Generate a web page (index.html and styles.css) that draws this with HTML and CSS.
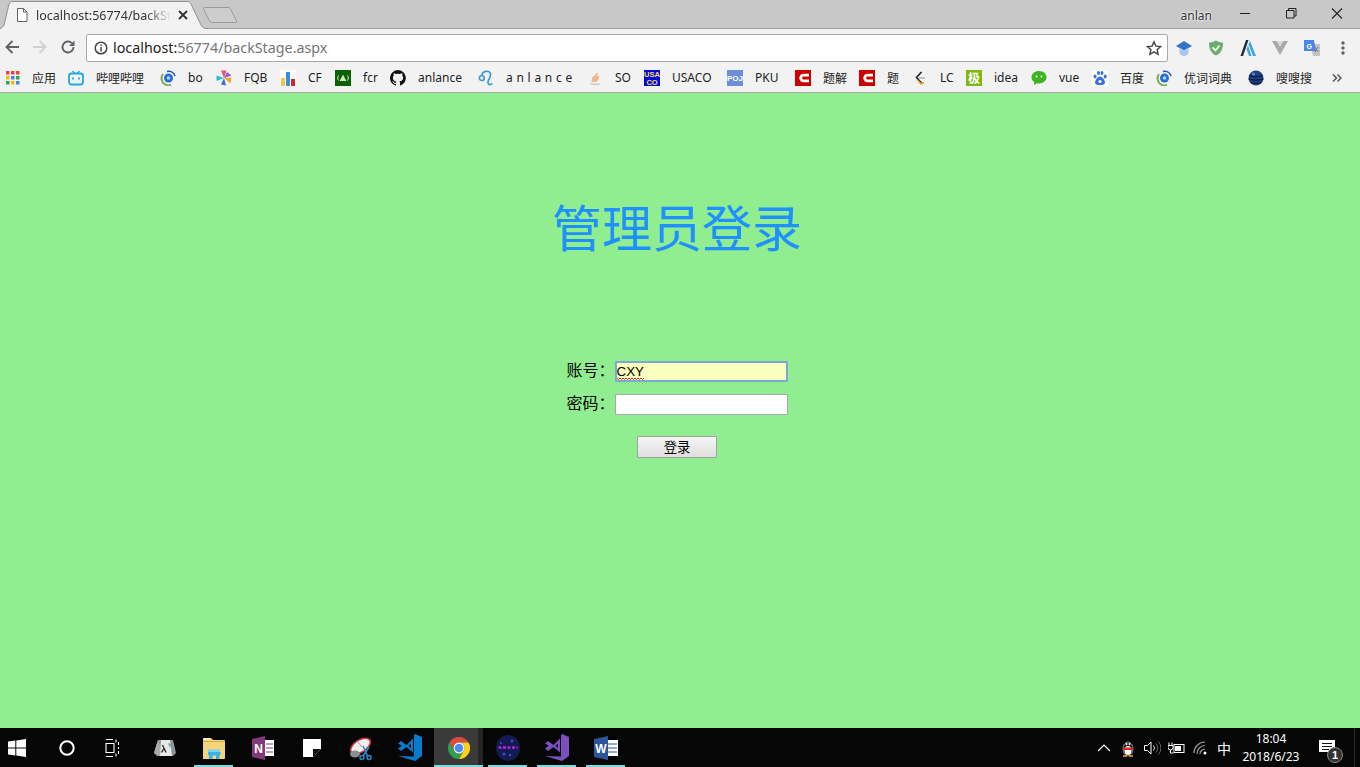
FILE: index.html
```html
<!DOCTYPE html>
<html>
<head>
<meta charset="utf-8">
<title>管理员登录</title>
<link rel="stylesheet" href="styles.css">
</head>
<body>
<div class="tabstrip">
  <div class="tab">
    <svg class="tab-shape" width="208" height="29" viewBox="0 0 208 29"><path d="M0 28.500 C2 28 3 27 4 25 L9 4 C10 2 11 1.500 13 1.500 L187 1.500 C189 1.500 190 2 191 4 L201 25 C202 27 203 28 206 28.500 L208 28.500 L208 29 L0 29Z" fill="#f2f2f2"/><path d="M0 28.500 C2 28 3 27 4 25 L9 4 C10 2 11 1.500 13 1.500 L187 1.500 C189 1.500 190 2 191 4 L201 25 C202 27 203 28 206 28.500 L208 28.500" fill="none" stroke="#8f8f8f"/></svg>
    <svg class="tab-icon" width="16" height="16" viewBox="0 0 16 16"><path d="M3.500 1.500h6l3.500 3.500v9.500h-9.500zM9.500 1.500v3.500h3.500" fill="#fff" stroke="#5f6368"/></svg>
    <span class="tab-title">localhost:56774/backSt</span>
    <svg class="tab-close" width="10" height="10" viewBox="0 0 10 10"><path d="M1 1l8 8M9 1l-8 8" stroke="#333" stroke-width="1.800"/></svg>
  </div>
  <svg class="newtab" width="36" height="18" viewBox="0 0 36 18"><path d="M1.500 1.500h24c1 0 1.500.5 2 1.500l6 12c.5 1 0 1.500-1 1.500h-24c-1 0-1.500-.5-2-1.500l-6-12c-.5-1 0-1.500 1-1.500z" fill="#cdcdcd" stroke="#9a9a9a"/></svg>
  <span class="user">anlan</span>
  <div class="winbtns">
    <svg width="46" height="28" viewBox="0 0 46 28"><path d="M18 13.500h10" stroke="#222"/></svg>
    <svg width="46" height="28" viewBox="0 0 46 28"><path d="M18.500 10.500h7.500v7.500h-7.500zM20.500 10.500v-2h7.500v7.500h-2" fill="none" stroke="#222"/></svg>
    <svg width="46" height="28" viewBox="0 0 46 28"><path d="M18 8.500l10 10M28 8.500l-10 10" stroke="#222" stroke-width="1.100"/></svg>
  </div>
</div>

<div class="toolbar">
  <svg class="navbtn" width="16" height="16" viewBox="0 0 16 16"><path d="M15 8H2.500M8.500 2L2.500 8l6 6" fill="none" stroke="#5f6368" stroke-width="1.900"/></svg>
  <svg class="navbtn" width="16" height="16" viewBox="0 0 16 16"><path d="M1 8h12.500M7.500 2l6 6-6 6" fill="none" stroke="#cfd1d3" stroke-width="1.900"/></svg>
  <svg class="navbtn" width="16" height="16" viewBox="0 0 16 16"><path d="M13.500 8a5.500 5.500 0 1 1-1.600-3.900" fill="none" stroke="#5f6368" stroke-width="1.900"/><path d="M14.500 1.500v5.500H9z" fill="#5f6368"/></svg>
  <div class="omnibox">
    <svg class="info" width="14" height="14" viewBox="0 0 14 14"><circle cx="7" cy="7" r="5.800" fill="none" stroke="#444" stroke-width="1.500"/><path d="M7 6v4.500M7 3.500v1.500" stroke="#444" stroke-width="1.500"/></svg>
    <span class="url"><b>localhost:</b>56774/backStage.aspx</span>
    <svg class="star" width="16" height="16" viewBox="0 0 16 16"><path d="M8 1.800l1.900 4.300 4.600.5-3.400 3.100 1 4.600L8 11.900l-4.100 2.400 1-4.600L1.500 6.600l4.600-.5z" fill="none" stroke="#444" stroke-width="1.400"/></svg>
  </div>
  <div class="extensions">
    <svg width="16" height="16" viewBox="0 0 16 16"><path d="M8 1L16 6 8 10.500 0 6z" fill="#2f74c9"/><path d="M3.500 8.500L8 11l4.500-2.500V12a4.500 4 0 0 1-9 0z" fill="#a9c6ec"/></svg>
    <svg width="16" height="16" viewBox="0 0 16 16"><path d="M8 .5c2.500 1.500 4.500 2 7 2 0 6-1.500 10.500-7 13-5.500-2.500-7-7-7-13 2.500 0 4.500-.5 7-2z" fill="#68ae6a"/><path d="M4.500 7.500L7.500 10.500 11.500 5.500" fill="none" stroke="#fff" stroke-width="1.800"/></svg>
    <svg width="16" height="16" viewBox="0 0 16 16"><path d="M6 0h2.500L3 16H.5z" fill="#1b2a3a"/><path d="M8.500 4.500L13 16h3L10 1z" fill="#3fa5dc"/><path d="M6.500 9L9 16h2.500L8 5.500z" fill="#3fa5dc"/></svg>
    <svg width="16" height="16" viewBox="0 0 16 16"><path d="M0 1h16L8 15z" fill="#a8a8a8"/><path d="M4.500 1h7L8 7z" fill="#d8d8d8"/></svg>
    <svg width="16" height="16" viewBox="0 0 16 16"><path d="M6 4h10v12H9z" fill="#c4c4c4"/><path d="M0 0h10l2 11H0z" fill="#4a86e8"/><path d="M11 7l3 5M14 7l-3 5" stroke="#777"/><text x="2.500" y="9" class="ext-g">G</text></svg>
    <svg class="menu" width="4" height="16" viewBox="0 0 4 16"><circle cx="2" cy="3" r="1.700" fill="#5f6368"/><circle cx="2" cy="8" r="1.700" fill="#5f6368"/><circle cx="2" cy="13" r="1.700" fill="#5f6368"/></svg>
  </div>
</div>

<div class="bookmarks">
  <a class="mark apps"><svg width="16" height="16" viewBox="0 0 16 16"><g><rect x="1" y="1" width="3.500" height="3.500" fill="#e8453c"/><rect x="6" y="1" width="3.500" height="3.500" fill="#e8453c"/><rect x="11" y="1" width="3.500" height="3.500" fill="#e8453c"/><rect x="1" y="6" width="3.500" height="3.500" fill="#fbbc05"/><rect x="6" y="6" width="3.500" height="3.500" fill="#4285f4"/><rect x="11" y="6" width="3.500" height="3.500" fill="#34a853"/><rect x="1" y="11" width="3.500" height="3.500" fill="#34a853"/><rect x="6" y="11" width="3.500" height="3.500" fill="#fbbc05"/><rect x="11" y="11" width="3.500" height="3.500" fill="#4285f4"/></g></svg>应用</a>
  <a class="mark"><svg width="16" height="16" viewBox="0 0 16 16"><path d="M4.500 1l2.500 2.500M11.500 1L9 3.500" stroke="#20a8e0" stroke-width="1.400"/><rect x="1" y="3.500" width="14" height="11" rx="2.500" fill="none" stroke="#20a8e0" stroke-width="1.800"/><path d="M5 7.500v2M11 7.500v2" stroke="#20a8e0" stroke-width="1.800"/></svg>哔哩哔哩</a>
  <a class="mark"><svg width="16" height="16" viewBox="0 0 16 16"><circle cx="8.500" cy="8" r="4.500" fill="#2a6fd0"/><circle cx="8.500" cy="8" r="1.800" fill="#a9d8f5"/><path d="M7 1.500a7 7 0 0 1 8 4.500" fill="none" stroke="#1d55b5" stroke-width="1.600"/><path d="M3 4a7 7 0 0 0 1.500 10 7 7 0 0 0 6.500 1" fill="none" stroke="#7da953" stroke-width="2"/></svg>bo</a>
  <a class="mark"><svg width="16" height="16" viewBox="0 0 16 16"><path d="M8 8L5 .5h5.500z" fill="#e9536b"/><path d="M8 8l3-6 4.500 3.500z" fill="#8c5fc9"/><path d="M8 8l7.500-.5-1 6z" fill="#f1a62c"/><path d="M8 8l2 7.500-5-1z" fill="#3a6fd8"/><path d="M8 8L.5 11V5.500z" fill="#27bfc9"/></svg>FQB</a>
  <a class="mark"><svg width="16" height="16" viewBox="0 0 16 16"><rect width="16" height="16" fill="#fff"/><rect x="1" y="8" width="4" height="8" fill="#f4c542"/><rect x="6" y="2" width="4" height="14" fill="#3a8ee0"/><rect x="11" y="9" width="4" height="7" fill="#cc2a2a"/></svg>CF</a>
  <a class="mark"><svg width="16" height="16" viewBox="0 0 16 16"><rect width="16" height="16" fill="#0b6200"/><path d="M8 4.500l3.300 6.500H4.700z" fill="#d8e8d0"/><path d="M3.500 5.500C2.500 7 2.500 9 3.500 10.500M12.500 5.500C13.500 7 13.500 9 12.500 10.500" fill="none" stroke="#d8e8d0"/></svg>fcr</a>
  <a class="mark"><svg width="16" height="16" viewBox="0 0 16 16"><path d="M8 0a8 8 0 0 0-2.500 15.600c.4.100.5-.2.500-.4v-1.400c-2.200.5-2.700-1-2.700-1-.4-.9-.9-1.200-.9-1.200-.7-.5.100-.5.100-.5.800.1 1.200.8 1.200.8.700 1.200 1.900.9 2.300.7.100-.5.300-.9.500-1.100-1.800-.2-3.600-.9-3.600-4 0-.9.300-1.600.8-2.100-.1-.2-.4-1 .1-2.100 0 0 .7-.2 2.200.8a7.600 7.600 0 0 1 4 0c1.500-1 2.200-.8 2.200-.8.400 1.100.2 1.900.1 2.100.5.600.8 1.300.8 2.100 0 3.100-1.900 3.700-3.700 3.900.3.300.6.700.6 1.500v2.200c0 .2.100.5.600.4A8 8 0 0 0 8 0z" fill="#111"/></svg>anlance</a>
  <a class="mark"><svg width="16" height="16" viewBox="0 0 16 16"><circle cx="3.800" cy="8" r="2.500" fill="none" stroke="#3a9ad9" stroke-width="1.700"/><path d="M4 5.500C3 1 13 -1 12.500 5 12.200 8.500 9.300 10.500 10 13 10.500 15 13 15.200 14.300 13.500" fill="none" stroke="#3a9ad9" stroke-width="1.700"/></svg><span class="spaced">a n l a n c e</span></a>
  <a class="mark"><svg width="16" height="16" viewBox="0 0 16 16"><path d="M3 13.500h10l-.8 1.500H3.800z" fill="#c9c9c9"/><path d="M5 8l5-5.500 1.500 1L9 6l3-.5v3L9.500 12H4.500z" fill="#f3b58a"/></svg>SO</a>
  <a class="mark"><svg width="16" height="16" viewBox="0 0 16 16"><rect width="16" height="16" fill="#0a0ad8"/><text x="8" y="7" class="usa">USA</text><text x="8" y="14.500" class="usa">CO</text></svg>USACO</a>
  <a class="mark"><svg width="16" height="16" viewBox="0 0 16 16"><rect width="16" height="16" fill="#6d8fd6"/><text x="8" y="10.500" class="poj">POJ</text></svg>PKU</a>
  <a class="mark"><svg width="16" height="16" viewBox="0 0 16 16"><rect width="16" height="16" fill="#cc0000"/><path d="M14 5.200H8.500a2.800 2.800 0 0 0 0 5.600H14" fill="none" stroke="#fff" stroke-width="2.800"/></svg>题解</a>
  <a class="mark"><svg width="16" height="16" viewBox="0 0 16 16"><rect width="16" height="16" fill="#cc0000"/><path d="M14 5.200H8.500a2.800 2.800 0 0 0 0 5.600H14" fill="none" stroke="#fff" stroke-width="2.800"/></svg>题</a>
  <a class="mark"><svg width="16" height="16" viewBox="0 0 16 16"><path d="M9.500 2L4.500 7.500l5 5.500" fill="none" stroke="#222" stroke-width="1.600"/><path d="M7 8h6" stroke="#aaa" stroke-width="1.400"/><path d="M5.500 10l3.500 4 3-1.500" fill="none" stroke="#f0a030" stroke-width="1.500"/></svg>LC</a>
  <a class="mark"><svg width="16" height="16" viewBox="0 0 16 16"><rect width="16" height="16" fill="#7fb80e"/><text x="8" y="13" class="ji">极</text></svg>idea</a>
  <a class="mark"><svg width="16" height="16" viewBox="0 0 16 16"><path d="M8 1C3.800 1 .5 3.700.5 7.200c0 2 1.100 3.700 2.800 4.900L2.800 15l3.100-1.800c.7.100 1.400.2 2.100.2 4.200 0 7.500-2.800 7.500-6.200S12.200 1 8 1z" fill="#3eb51f"/><circle cx="5.500" cy="6.500" r="1" fill="#fff"/><circle cx="10.500" cy="6.500" r="1" fill="#fff"/></svg>vue</a>
  <a class="mark"><svg width="16" height="16" viewBox="0 0 16 16"><rect width="16" height="16" fill="#fff"/><ellipse cx="3" cy="6.500" rx="1.500" ry="2" fill="#3a6fe0"/><ellipse cx="6.500" cy="3" rx="1.500" ry="2" fill="#3a6fe0"/><ellipse cx="10" cy="3" rx="1.500" ry="2" fill="#3a6fe0"/><ellipse cx="13.200" cy="6.500" rx="1.500" ry="2" fill="#3a6fe0"/><path d="M8 6.500c2.500 0 5 4 5 6s-2 2.500-5 2.500-5-.5-5-2.500 2.500-6 5-6z" fill="#3a6fe0"/><circle cx="8" cy="11.500" r="1.600" fill="#fff"/></svg>百度</a>
  <a class="mark"><svg width="16" height="16" viewBox="0 0 16 16"><circle cx="8.500" cy="8" r="4.500" fill="#2a6fd0"/><circle cx="8.500" cy="8" r="1.800" fill="#a9d8f5"/><path d="M7 1.500a7 7 0 0 1 8 4.500" fill="none" stroke="#1d55b5" stroke-width="1.600"/><path d="M3 4a7 7 0 0 0 1.500 10 7 7 0 0 0 6.500 1" fill="none" stroke="#7da953" stroke-width="2"/></svg>优词词典</a>
  <a class="mark"><svg width="16" height="16" viewBox="0 0 16 16"><circle cx="8" cy="8" r="7.500" fill="#1c3f86"/><path d="M1 5.500c4 1.500 9 1.500 14 0M.5 9c4.500 1.500 10 1.500 15 0M2.500 12.500c4 1 7 1 11 0" fill="none" stroke="#0d1b3d" stroke-width="1.200"/><circle cx="5.500" cy="4" r="1.500" fill="#5b8ad4"/></svg>嗖嗖搜</a>
  <svg class="more" width="10" height="10" viewBox="0 0 10 10"><path d="M1 1.500L4.500 5 1 8.500M5.500 1.500L9 5 5.500 8.500" fill="none" stroke="#555" stroke-width="1.500"/></svg>
</div>

<main class="page">
  <h1 class="page-title">管理员登录</h1>
  <form class="login">
    <label class="field-label" for="account">账号：</label>
    <span class="field-wrap">
      <input class="field field-focus" id="account" type="text" value="CXY">
      <svg class="squiggle" width="27" height="3" viewBox="0 0 27 3"><path d="M0 1l1.500 1.500L3 1l1.500 1.500L6 1l1.500 1.500L9 1l1.500 1.500L12 1l1.500 1.500L15 1l1.500 1.500L18 1l1.500 1.500L21 1l1.500 1.500L24 1l1.500 1.500L27 1" fill="none" stroke="#e02020"/></svg>
    </span>
    <label class="field-label" for="password">密码：</label>
    <input class="field" id="password" type="password">
    <button class="submit" type="button">登录</button>
  </form>
</main>

<div class="taskbar">
  <div class="task"><svg width="18" height="18" viewBox="0 0 18 18"><path d="M0 2.600L7.300 1.600V8.500H0zM8.300 1.400L18 0V8.500H8.300zM0 9.500H7.300V16.400L0 15.400zM8.300 9.500H18V18L8.300 16.600z" fill="#fff"/></svg></div>
  <div class="task"><svg width="16" height="16" viewBox="0 0 16 16"><circle cx="8" cy="8" r="6.700" fill="none" stroke="#fff" stroke-width="2"/></svg></div>
  <div class="task taskview"><svg width="18" height="18" viewBox="0 0 18 18"><path d="M0 .5h7M0 17.500h7M0 4.500h8v9H0zM10 .5v3M10 14.500v3M12.500 3v3M12.500 8v2M12.500 12v3" transform="translate(1 0)" fill="none" stroke="#fff" stroke-width="1.100"/></svg></div>
  <div class="task"><svg width="22" height="18" viewBox="0 0 22 18"><path d="M4 1h15l3 13-3 3H3l-3-3z" fill="#8f9498"/><path d="M7 1h9l2 16H6z" fill="#e8e8e8"/><path d="M0 14l6 3V8L4 1z" fill="#a8acaf"/><path d="M8.500 6l3.500 7.500M10.200 9l-2.700 4.500" stroke="#222" stroke-width="1.300" fill="none"/><path d="M14 4l3 1-1 4z" fill="#4fb3a5"/></svg></div>
  <div class="task running"><svg width="22" height="22" viewBox="0 0 22 22"><path d="M0 1h8l2 2h11a1 1 0 0 1 1 1v17a1 1 0 0 1-1 1H0z" fill="#f6d67a"/><path d="M0 4.500h22" stroke="#d9ab44"/><path d="M1 2h6" stroke="#fff" stroke-width="1.200"/><path d="M4.500 12.500h13l-1 3.500H6z" fill="#7bd0f5"/><path d="M5 15h12.500v3h-1v4H13v-3.500h-3.500V22H6v-4H5z" fill="#35b1ee"/></svg></div>
  <div class="task"><svg width="22" height="24" viewBox="0 0 22 24"><path d="M0 3L13 0v24L0 21z" fill="#80397b"/><path d="M13 4h9v16h-9z" fill="#fff"/><path d="M14 8h7M14 12h7M14 16h7" stroke="#80397b"/><text x="6.500" y="16.500" class="tile-letter">N</text></svg></div>
  <div class="task"><svg width="18" height="18" viewBox="0 0 18 18"><path d="M0 0h18v10l-8 8H0z" fill="#fff"/><path d="M10 10h8l-8 8z" fill="#111"/></svg></div>
  <div class="task"><svg width="24" height="26" viewBox="0 0 24 26"><ellipse cx="11.500" cy="11" rx="11" ry="6" transform="rotate(-32 11.500 11)" fill="#eee" stroke="#c8333c" stroke-width="1.600"/><path d="M13 12L8 6" stroke="#999"/><ellipse cx="6" cy="19" rx="5" ry="3.500" fill="#8b8f93"/><path d="M14 11l5 11M20 12l-6 9" stroke="#2e86c8" stroke-width="1.600"/><circle cx="20" cy="22.500" r="2" fill="none" stroke="#2e86c8" stroke-width="1.500"/><circle cx="13" cy="22.500" r="2" fill="none" stroke="#2e86c8" stroke-width="1.500"/></svg></div>
  <div class="task"><svg width="24" height="27" viewBox="0 0 24 27"><path d="M17 0L24 3V22L17 27 0 22l16 .5V1zM0 9.500L3 7l5.500 4L15 4.500V18.500L8.500 13 3 17 0 14.500 3.800 11.800zM10.500 11.800l2.500 2.200V9.500z" fill="#0a7acc" fill-rule="evenodd"/></svg></div>
  <div class="task current"><svg width="22" height="22" viewBox="0 0 22 22"><path d="M11 0A11 11 0 0 1 20.530 5.500H11A5.500 5.500 0 0 0 6.240 13.750L1.470 5.500A11 11 0 0 1 11 0z" fill="#dd4b3e"/><path d="M1.470 5.500L6.240 13.750A5.500 5.500 0 0 0 15.760 13.750L11 22A11 11 0 0 1 1.470 5.500z" fill="#2fa04d"/><path d="M20.530 5.500H11A5.500 5.500 0 0 1 15.760 13.750L11 22A11 11 0 0 0 20.530 5.500z" fill="#fcd116"/><circle cx="11" cy="11" r="5.500" fill="#fff"/><circle cx="11" cy="11" r="4.300" fill="#4c8bf5"/></svg></div>
  <div class="task running"><svg width="24" height="26" viewBox="0 0 24 26"><ellipse cx="12" cy="13" rx="12" ry="13" fill="#141a52"/><circle cx="8" cy="19" r="1.500" fill="#3a4bd0"/><circle cx="16" cy="6" r="1.500" fill="#3a4bd0"/><circle cx="14" cy="20" r="1" fill="#4a6be0"/><circle cx="5" cy="8" r="1" fill="#3a4bd0"/><path d="M2.500 12.500h19" stroke="#c21fd8" stroke-width="2.500" stroke-dasharray="3 1.500"/></svg></div>
  <div class="task running"><svg width="24" height="27" viewBox="0 0 24 27"><path d="M17 0L24 3V22L17 27 0 22l16 .5V1zM0 9.500L3 7l5.500 4L15 4.500V18.500L8.500 13 3 17 0 14.500 3.800 11.800zM10.500 11.800l2.500 2.200V9.500z" fill="#7a4fbf" fill-rule="evenodd"/></svg></div>
  <div class="task running"><svg width="24" height="24" viewBox="0 0 24 24"><path d="M13 4h11v16H13z" fill="#fff"/><path d="M14 8h9M14 12h9M14 16h9" stroke="#2b579a"/><path d="M0 3L14 0v24L0 21z" fill="#2b579a"/><text x="7" y="16.500" class="tile-letter">W</text></svg></div>

  <div class="tray">
    <span class="tray-slot"><svg width="14" height="8" viewBox="0 0 14 8"><path d="M1 7l6-6 6 6" fill="none" stroke="#fff" stroke-width="1.200"/></svg></span>
    <span class="tray-slot"><svg width="16" height="18" viewBox="0 0 16 18"><ellipse cx="8" cy="10" rx="5" ry="7" fill="#222" stroke="#eee" stroke-width=".5"/><ellipse cx="8" cy="11.500" rx="3.500" ry="4.500" fill="#fff"/><path d="M3 8.500h10l-1 2.500H4z" fill="#e22"/><path d="M3 17h4M9 17h4" stroke="#f5a623" stroke-width="1.500"/><circle cx="6.500" cy="5" r="1" fill="#fff"/><circle cx="9.500" cy="5" r="1" fill="#fff"/></svg></span>
    <span class="tray-slot"><svg width="17" height="14" viewBox="0 0 17 14"><path d="M.5 4.500h3L7 1v12L3.500 9.500h-3z" fill="none" stroke="#fff"/><path d="M9.500 4.500a4 4 0 0 1 0 5" fill="none" stroke="#ddd"/><path d="M12 2.500a7 7 0 0 1 0 9M14.500 .5a10 10 0 0 1 0 13" fill="none" stroke="#666"/></svg></span>
    <span class="tray-slot"><svg width="17" height="14" viewBox="0 0 17 14"><path d="M1 1.500v3M4 1.500v3M0 4.500h5v2a2.500 2.500 0 0 1-5 0zM2.500 9v3h3" fill="none" stroke="#fff"/><rect x="6" y="3.500" width="10" height="8" fill="none" stroke="#fff"/><rect x="7" y="5" width="6" height="5" fill="#fff"/></svg></span>
    <span class="tray-slot"><svg width="15" height="14" viewBox="0 0 15 14"><path d="M1 12A11 11 0 0 1 12 1M4 13A8 8 0 0 1 12 4.500M7 13a5 5 0 0 1 5-5" fill="none" stroke="#999" stroke-width="1.200"/><circle cx="12" cy="12" r="1.500" fill="#fff"/></svg></span>
    <span class="tray-slot ime">中</span>
    <div class="clock"><span>18:04</span><span>2018/6/23</span></div>
    <div class="notify">
      <svg width="18" height="17" viewBox="0 0 18 17"><path d="M1 0h16v12h-3l-4 4v-4H1z" fill="#fff"/><path d="M4 3.500h10M4 6.500h10M4 9.500h7" stroke="#111"/></svg>
      <span class="badge">1</span>
    </div>
  </div>
</div>
</body>
</html>
```

FILE: styles.css
```css
* { box-sizing: border-box; }
html, body { margin: 0; height: 767px; overflow: hidden; }
body {
  display: flex;
  flex-direction: column;
  font-family: "Noto Sans", "Noto Sans CJK SC", sans-serif;
  background: #90ee90;
}
svg { display: block; flex: none; }

/* title bar */
.tabstrip {
  height: 29px;
  flex: none;
  display: flex;
  background: #c8c8c8;
  border-bottom: 1px solid #a0a0a0;
}
.tab {
  width: 198px;
  height: 28px;
  display: flex;
  align-items: center;
  position: relative;
  padding: 2px 0 0 14px;
  z-index: 1;
}
.tab-shape { position: absolute; left: 0; top: 0; }
.tab-icon, .tab-title, .tab-close { position: relative; }
.tab-icon { margin-top: -1px; }
.tab-title {
  margin-left: 6px;
  width: 135px;
  font-size: 12.500px;
  color: #333;
  white-space: nowrap;
  -webkit-mask-image: linear-gradient(to right, #000 82%, transparent 100%);
  mask-image: linear-gradient(to right, #000 82%, transparent 100%);
}
.tab-close { margin-left: 7px; }
.newtab { margin: 6px 0 0 5px; }
.user {
  margin: 7px 0 0 auto;
  font-size: 12px;
  color: #333;
  text-shadow: 0 0 3px #fff, 0 0 2px #fff;
}
.winbtns { display: flex; margin-left: 10px; }

/* toolbar */
.toolbar {
  height: 35px;
  flex: none;
  display: flex;
  align-items: center;
  background: #f2f2f2;
}
.navbtn { margin: 1px 6px 0; }
.navbtn:first-child { margin-left: 4px; }
.omnibox {
  width: 1082px;
  height: 28px;
  margin-left: 4px;
  margin-top: 2px;
  display: flex;
  align-items: center;
  padding: 0 5px 0 7px;
  background: #fff;
  border: 1px solid #a9a9a9;
  border-radius: 2px;
}
.url { margin-left: 5px; font-size: 14.300px; color: #757575; }
.url b { font-weight: 400; color: #222; }
.star { margin-left: auto; }
.extensions {
  display: flex;
  align-items: center;
  gap: 16px;
  margin: 2px 0 0 8px;
}
.menu { margin-left: 5px; }
.ext-g { font: 700 7px "Liberation Sans", sans-serif; fill: #fff; }

/* bookmarks */
.bookmarks {
  height: 29px;
  flex: none;
  display: grid;
  grid-template-columns: 63px 92px 56px 64px 55px 55px 88px 109px 57px 83px 68px 64px 53px 54px 65px 61px 64px 92px 84px 10px;
  align-items: center;
  padding: 0 0 1px 5px;
  background: #f2f2f2;
  border-bottom: 1px solid #a8a8a8;
}
.mark {
  display: flex;
  align-items: center;
  gap: 12px;
  font-size: 12px;
  color: #222;
  white-space: nowrap;
}
.apps { gap: 11px; }
.spaced { letter-spacing: .3px; }
.usa { font: 700 7.500px "Liberation Sans", sans-serif; fill: #f4e04d; text-anchor: middle; }
.poj { font: 700 8px "Liberation Sans", sans-serif; fill: #fff; text-anchor: middle; }
.ji { font: 700 12px "Noto Sans CJK SC", sans-serif; fill: #fff; text-anchor: middle; }

/* login page */
.page {
  flex: 1;
  padding-right: 6px;
  display: flex;
  flex-direction: column;
  align-items: center;
}
.page-title {
  margin: 100px 0 0;
  font-size: 50px;
  line-height: 70px;
  font-weight: 400;
  color: #1e90ff;
}
.login {
  margin-top: 98px;
  display: grid;
  grid-template-columns: 48px 173px;
  row-gap: 12px;
  align-items: start;
}
.field-label {
  height: 19px;
  margin-bottom: 2px;
  font-size: 16px;
  line-height: 19px;
  color: #000;
  white-space: nowrap;
}
.field-wrap { position: relative; display: block; height: 21px; }
.field {
  display: block;
  width: 173px;
  height: 21px;
  padding: 1px 2px;
  background: #fff;
  border: 1px solid #a9a9a9;
  font: 13.333px "Liberation Sans", sans-serif;
  outline: none;
}
.field-focus {
  background: #faffbd;
  border: 2px solid #7aa9d6;
  padding: 0;
}
.squiggle { position: absolute; left: 2px; top: 16px; }
.submit {
  grid-column: 1 / 3;
  justify-self: center;
  width: 80px;
  height: 22px;
  margin-top: 9px;
  padding: 0 0 2px;
  border: 1px solid #a0a0a0;
  border-radius: 1px;
  background: linear-gradient(#f6f6f6, #dedede);
  font: 13.333px "Noto Sans CJK SC", sans-serif;
  color: #000;
}

/* windows taskbar */
.taskbar {
  height: 39px;
  flex: none;
  display: flex;
  background: #060606;
  color: #fff;
}
.task {
  width: 49px;
  display: flex;
  align-items: center;
  justify-content: center;
  position: relative;
}
.task:first-child { width: 42px; justify-content: flex-end; padding-right: 16px; }
.taskview { padding-right: 4px; }
.running::after, .current::after {
  content: "";
  position: absolute;
  bottom: 0;
  left: 5px;
  right: 5px;
  height: 2px;
  background: #7fd8e0;
}
.current { background: linear-gradient(to right, #3a3a3a 44px, #242424 44px); }
.current::after { left: 0; right: 0; }
.tile-letter { font: 700 12px "Liberation Sans", sans-serif; fill: #fff; text-anchor: middle; }
.tray {
  margin-left: auto;
  display: flex;
  align-items: center;
  height: 39px;
  padding-right: 5px;
}
.tray-slot {
  width: 24px;
  display: flex;
  justify-content: center;
}
.ime { font: 14px "Noto Sans CJK SC", sans-serif; }
.clock {
  width: 70px;
  display: flex;
  flex-direction: column;
  align-items: center;
  font-size: 12px;
  line-height: 18px;
}
.notify {
  position: relative;
  width: 49px;
  height: 39px;
  padding: 12px 0 0 12px;
  border-right: 1px solid #2a2a2a;
}
.badge {
  position: absolute;
  left: 21px;
  top: 19px;
  width: 16px;
  height: 16px;
  border-radius: 50%;
  background: #333;
  border: 1px solid #888;
  font: 700 11px/14px "Liberation Sans", sans-serif;
  text-align: center;
}
```
